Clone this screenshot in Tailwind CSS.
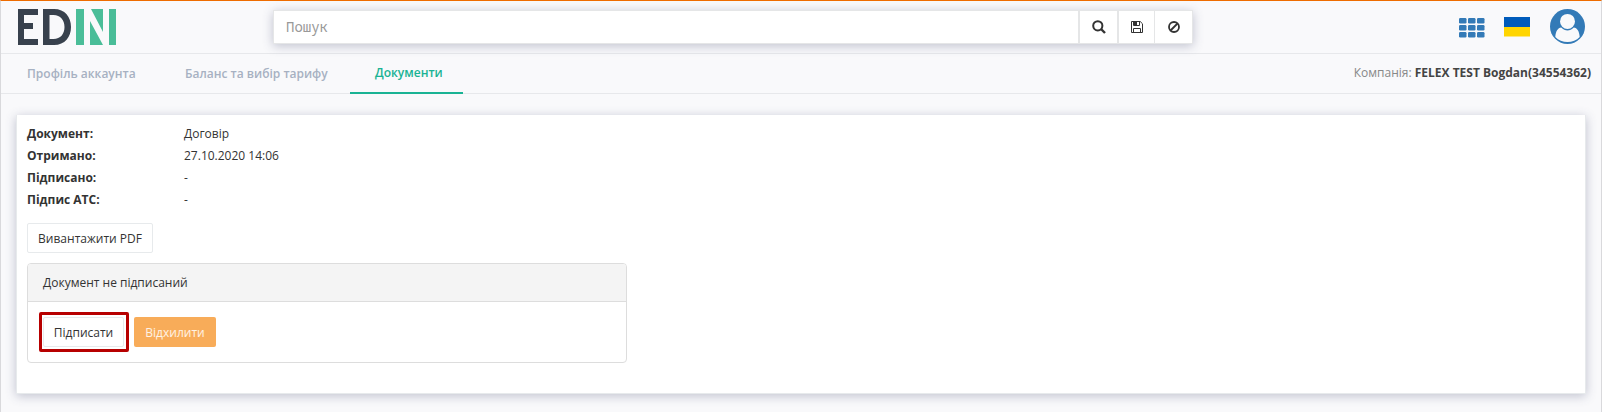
<!DOCTYPE html>
<html lang="uk">
<head>
<meta charset="utf-8">
<title>EDIN</title>
<script src="https://cdn.jsdelivr.net/npm/@tailwindcss/browser@4"></script>
</head>
<body class="h-[412px] overflow-hidden bg-[#f9f9fb] font-['Open_Sans','Noto_Sans',sans-serif] text-[12px] leading-[18px] text-[#333]">
<div class="h-[412px] border-x border-t border-x-[#d9d9dc] border-t-[#ee6c00]">
  <header class="flex h-[53px] items-start border-b border-[#e7e8eb]">
    <svg class="ml-[17px] mt-2 shrink-0" width="98" height="36" viewBox="0 0 98 36" aria-label="EDIN">
      <path fill="#38414d" d="M0 0H20V6H6V14H15V20H6V30H20V36H0zM25 0H36C47 0 53 8 53 18S47 36 36 36H25zM31.5 6V30H35.5C42.5 30 46.5 25 46.5 18S42.5 6 35.5 6z"/>
      <path fill="#4abd98" d="M58 0H66V36H58zM91 0H98V36H91zM72 12L85 36H72zM73 0H85V23z"/>
    </svg>
    <div class="ml-[157px] mt-[9px] flex h-[34px] w-[920px] border border-[#e5e6e7] bg-white shadow-[0_2px_10px_rgba(60,65,105,0.3)]">
      <div class="flex w-[804px] items-center pl-3 font-['Noto_Sans_Mono',monospace] text-[14px] text-[#999]"><span>Пошук</span></div>
      <div class="flex w-[39px] items-center justify-center border-l-2 border-[#e5e6e7]">
        <svg width="14" height="14" viewBox="0 0 14 14" fill="none" stroke="#333"><circle cx="5.8" cy="5.8" r="4.6" stroke-width="2"/><path d="M9 9L13 13" stroke-width="2.4"/></svg>
      </div>
      <div class="flex w-[37px] items-center justify-center border-l-2 border-[#e5e6e7]">
        <svg width="12" height="12" viewBox="0 0 12 12" fill="none" stroke="#333"><path d="M.5.5H9.2L11.5 2.8V11.5H.5zM2.5 11V7.5H9.5V11M2.5 .5V4.5H8.5V.5"/><path fill="#333" stroke="none" d="M3 1H6V4H3z"/></svg>
      </div>
      <div class="flex flex-1 items-center justify-center border-l border-[#e5e6e7]">
        <svg width="12" height="12" viewBox="0 0 12 12" fill="none" stroke="#333" stroke-width="1.8"><circle cx="6" cy="6" r="5"/><path d="M9.5 2.5L2.5 9.5"/></svg>
      </div>
    </div>
    <svg class="ml-[266px] mt-[17px] shrink-0" width="26" height="20" viewBox="0 0 26 20" fill="#337ab7">
      <rect width="7.5" height="5.5" rx="1.2"/><rect x="9" width="7.5" height="5.5" rx="1.2"/><rect x="18" width="7.5" height="5.5" rx="1.2"/>
      <rect y="7" width="7.5" height="5.5" rx="1.2"/><rect x="9" y="7" width="7.5" height="5.5" rx="1.2"/><rect x="18" y="7" width="7.5" height="5.5" rx="1.2"/>
      <rect y="14" width="7.5" height="5.5" rx="1.2"/><rect x="9" y="14" width="7.5" height="5.5" rx="1.2"/><rect x="18" y="14" width="7.5" height="5.5" rx="1.2"/>
    </svg>
    <svg class="ml-[19px] mt-4 shrink-0" width="26" height="20" viewBox="0 0 26 20"><path fill="#005bbb" d="M0 0H26V10H0z"/><path fill="#ffd500" d="M0 10H26V19.5H0z"/></svg>
    <svg class="ml-5 mt-2 shrink-0" width="35" height="35" viewBox="0 0 35 35">
      <circle cx="17.5" cy="17.5" r="17.5" fill="#337ab7"/>
      <path fill="#f9f9fb" d="M5.3 28C5.6 22.5 7.9 19 11.2 18.6C15 22.4 20 22.4 23.8 18.6C27.1 19 29.4 22.5 29.7 28C23.5 34.8 11.5 34.8 5.3 28z"/>
      <circle cx="17.5" cy="12.4" r="7.5" fill="#f9f9fb"/>
    </svg>
  </header>
  <nav class="flex h-10 items-start border-b border-[#e7e8eb] font-semibold text-[#a7b1c2]">
    <div class="ml-[26px] mt-[11px] w-[158px]"><span>Профіль аккаунта</span></div>
    <div class="mt-[11px] w-[165px]"><span>Баланс та вибір тарифу</span></div>
    <div class="h-10 w-[113px] shrink-0 border-b-2 border-[#1ab394] pl-[25px] pt-[10px] text-[#1ab394]"><span>Документи</span></div>
    <div class="ml-auto mr-[10px] mt-[10px] font-normal text-[#888]"><span>Компанія: </span><b class="font-bold text-[#444]">FELEX TEST Bogdan(34554362)</b></div>
  </nav>
  <main class="ml-[15px] mr-[15px] mt-[21px] h-[279px] border border-t-0 border-[#e7eaec] bg-white px-[10px] pt-2 shadow-[0_2px_10px_rgba(60,65,105,0.3)]">
    <dl class="grid grid-cols-[157px_1fr] text-[12px] leading-[22px]">
      <dt class="font-bold"><span>Документ:</span></dt><dd><span>Договір</span></dd>
      <dt class="font-bold"><span>Отримано:</span></dt><dd><span>27.10.2020 14:06</span></dd>
      <dt class="font-bold"><span>Підписано:</span></dt><dd><span>-</span></dd>
      <dt class="font-bold"><span>Підпис АТС:</span></dt><dd><span>-</span></dd>
    </dl>
    <button class="mt-3 block h-[30px] w-[126px] rounded-[2px] border border-[#e7eaec] bg-white pt-[2px]"><span>Вивантажити PDF</span></button>
    <section class="mt-[10px] h-[100px] w-[600px] overflow-hidden rounded-[4px] border border-[#ddd]">
      <div class="h-[38px] border-b border-[#ddd] bg-[#f4f4f4] pl-[15px] pt-[10px]"><span>Документ не підписаний</span></div>
      <div class="flex items-start pl-[11px] pt-[10px]">
        <div class="h-10 w-[90px] rounded-[2px] border-[3px] border-[#b70000] p-[2px]">
          <button class="-ml-px block h-[30px] w-[81px] rounded-[2px] border border-[#e7eaec] pt-[2px]"><span>Підписати</span></button>
        </div>
        <button class="ml-[5px] mt-[5px] h-[30px] w-[82px] rounded-[2px] bg-[#f8ac59] pt-[2px] text-white/85"><span>Відхилити</span></button>
      </div>
    </section>
  </main>
</div>
</body>
</html>
